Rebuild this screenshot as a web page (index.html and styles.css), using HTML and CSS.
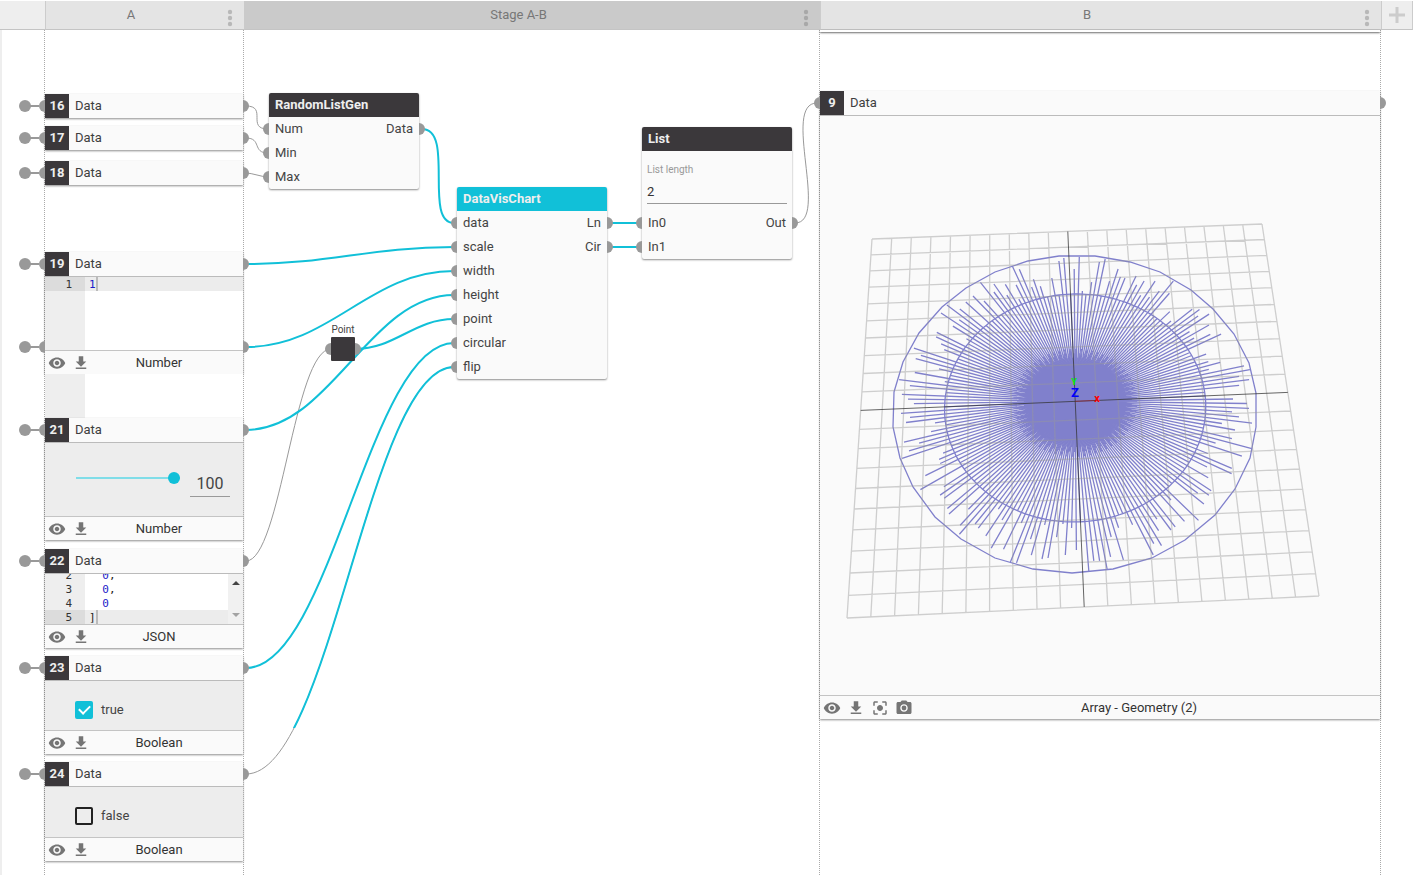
FILE: index.html
```html
<!DOCTYPE html>
<html lang="en">
<head>
<meta charset="utf-8">
<title>Stage A-B</title>
<link rel="stylesheet" href="styles.css">
</head>
<body>
<svg class="symbols" aria-hidden="true">
  <symbol id="eye" viewBox="0 0 24 24"><path d="M12 4.5C7 4.500 2.730 7.610 1 12c1.730 4.390 6 7.500 11 7.500s9.270-3.110 11-7.500c-1.730-4.390-6-7.500-11-7.500zM12 17c-2.760 0-5-2.240-5-5s2.240-5 5-5 5 2.240 5 5-2.240 5-5 5zm0-8c-1.660 0-3 1.340-3 3s1.340 3 3 3 3-1.340 3-3-1.340-3-3-3z"/></symbol>
  <symbol id="download" viewBox="0 0 24 24"><path d="M19 10h-4V3H9v7H5l7 7zM5 18v2h14v-2z"/></symbol>
  <symbol id="focus" viewBox="0 0 24 24"><path d="M12 8c-2.210 0-4 1.790-4 4s1.790 4 4 4 4-1.790 4-4-1.790-4-4-4zm-7 7H3v4c0 1.100.9 2 2 2h4v-2H5v-4zM5 5h4V3H5c-1.100 0-2 .9-2 2v4h2V5zm14-2h-4v2h4v4h2V5c0-1.100-.9-2-2-2zm0 16h-4v2h4c1.100 0 2-.9 2-2v-4h-2v4z"/></symbol>
  <symbol id="camera" viewBox="0 0 24 24"><circle cx="12" cy="12" r="3.200"/><path d="M9 2L7.170 4H4c-1.100 0-2 .9-2 2v12c0 1.100.9 2 2 2h16c1.100 0 2-.9 2-2V6c0-1.100-.9-2-2-2h-3.170L15 2H9zm3 15c-2.760 0-5-2.240-5-5s2.240-5 5-5 5 2.240 5 5-2.240 5-5 5z"/></symbol>
  <symbol id="dots" viewBox="0 0 6 18"><circle cx="3" cy="3" r="2.200"/><circle cx="3" cy="9" r="2.200"/><circle cx="3" cy="15" r="2.200"/></symbol>
</svg>

<header class="tabs">
  <div class="tab corner"></div>
  <div class="tab"><span class="tab-name">A</span><button class="menu" aria-label="Column A menu"><svg><use href="#dots"/></svg></button></div>
  <div class="tab active"><span class="tab-name">Stage A-B</span><button class="menu" aria-label="Stage menu"><svg><use href="#dots"/></svg></button></div>
  <div class="tab"><span class="tab-name">B</span><button class="menu" aria-label="Column B menu"><svg><use href="#dots"/></svg></button></div>
  <button class="tab add" aria-label="Add column"><svg viewBox="0 0 16 16"><path d="M8 0v16M0 8h16"/></svg></button>
</header>

<main class="board">
  <div class="rail"></div>

  <section class="column column-a">
    <article class="cell c16">
      <div class="title"><i class="port in source"></i><span class="num">16</span><span>Data</span><i class="port out"></i></div>
    </article>
    <article class="cell c17">
      <div class="title"><i class="port in source"></i><span class="num">17</span><span>Data</span><i class="port out"></i></div>
    </article>
    <article class="cell c18">
      <div class="title"><i class="port in source"></i><span class="num">18</span><span>Data</span><i class="port out"></i></div>
    </article>
    <article class="cell c19 open">
      <div class="title"><i class="port in source"></i><span class="num">19</span><span>Data</span><i class="port out"></i></div>
      <div class="editor editor-single">
        <div class="line current"><span class="ln">1</span><code><b>1</b><i class="caret"></i></code></div>
        <i class="port in source low"></i><i class="port out low"></i>
      </div>
      <div class="status">
        <button aria-label="Preview"><svg><use href="#eye"/></svg></button>
        <button aria-label="Download"><svg><use href="#download"/></svg></button>
        <span>Number</span>
      </div>
    </article>
    <div class="editor editor-rest"></div>
    <article class="cell open">
      <div class="title"><i class="port in source"></i><span class="num">21</span><span>Data</span><i class="port out"></i></div>
      <div class="panel slider-panel">
        <input class="slider" type="range" min="0" max="100" value="100" aria-label="Value slider">
        <input class="amount" type="text" value="100" aria-label="Value">
      </div>
      <div class="status">
        <button aria-label="Preview"><svg><use href="#eye"/></svg></button>
        <button aria-label="Download"><svg><use href="#download"/></svg></button>
        <span>Number</span>
      </div>
    </article>
    <article class="cell c22 open">
      <div class="title"><i class="port in source"></i><span class="num">22</span><span>Data</span><i class="port out"></i></div>
      <div class="editor editor-json">
        <div class="lines">
          <div class="line"><span class="ln">2</span><code>  <b>0</b>,</code></div>
          <div class="line"><span class="ln">3</span><code>  <b>0</b>,</code></div>
          <div class="line"><span class="ln">4</span><code>  <b>0</b></code></div>
          <div class="line current"><span class="ln">5</span><code>]<i class="caret"></i></code></div>
        </div>
        <div class="scroll">
          <svg viewBox="0 0 8 4"><path d="M0 4l4-4 4 4z"/></svg>
          <svg class="off" viewBox="0 0 8 4"><path d="M0 0l4 4 4-4z"/></svg>
        </div>
      </div>
      <div class="status">
        <button aria-label="Preview"><svg><use href="#eye"/></svg></button>
        <button aria-label="Download"><svg><use href="#download"/></svg></button>
        <span>JSON</span>
      </div>
    </article>
    <article class="cell c23 open">
      <div class="title"><i class="port in source"></i><span class="num">23</span><span>Data</span><i class="port out"></i></div>
      <div class="panel bool-panel"><label><input type="checkbox" checked>true</label></div>
      <div class="status">
        <button aria-label="Preview"><svg><use href="#eye"/></svg></button>
        <button aria-label="Download"><svg><use href="#download"/></svg></button>
        <span>Boolean</span>
      </div>
    </article>
    <article class="cell c24 open">
      <div class="title"><i class="port in source"></i><span class="num">24</span><span>Data</span><i class="port out"></i></div>
      <div class="panel bool-panel"><label><input type="checkbox">false</label></div>
      <div class="status">
        <button aria-label="Preview"><svg><use href="#eye"/></svg></button>
        <button aria-label="Download"><svg><use href="#download"/></svg></button>
        <span>Boolean</span>
      </div>
    </article>
  </section>

  <section class="stage">
    <svg class="wires" aria-hidden="true">
      <defs><clipPath id="live"><rect x="240" y="300" width="300" height="428"/></clipPath></defs>
      <g transform="translate(-244 -30)">
        <g class="idle">
          <path d="M246 106C268 106 246 129 268 129"/>
          <path d="M246 138C262 138 252 153 268 153"/>
          <path d="M246 173C252 173 262 177 268 177"/>
          <path d="M246 561C281 561 294 349 331 349"/>
          <path d="M246 774C331 774 369 367 454 367"/>
          <path d="M795 223C830 223 781 103 817 103"/>
        </g>
        <g class="flow">
          <path d="M422 129C455 129 423 223 454 223"/>
          <path d="M246 264C331 264 369 247 454 247"/>
          <path d="M246 347C331 347 369 271 454 271"/>
          <path d="M246 430C331 430 369 295 454 295"/>
          <path d="M355 349C395 349 414 319 454 319"/>
          <path d="M246 668C331 668 369 343 454 343"/>
          <path clip-path="url(#live)" d="M246 774C331 774 369 367 454 367"/>
          <path d="M610 223H640M610 247H640"/>
        </g>
      </g>
    </svg>

    <article class="node node-random">
      <h2>RandomListGen</h2>
      <div class="row"><i class="port in"></i><span>Num</span><span>Data</span><i class="port out"></i></div>
      <div class="row"><i class="port in"></i><span>Min</span></div>
      <div class="row"><i class="port in"></i><span>Max</span></div>
    </article>
    <article class="node node-chart">
      <h2>DataVisChart</h2>
      <div class="row"><i class="port in"></i><span>data</span><span>Ln</span><i class="port out"></i></div>
      <div class="row"><i class="port in"></i><span>scale</span><span>Cir</span><i class="port out"></i></div>
      <div class="row"><i class="port in"></i><span>width</span></div>
      <div class="row"><i class="port in"></i><span>height</span></div>
      <div class="row"><i class="port in"></i><span>point</span></div>
      <div class="row"><i class="port in"></i><span>circular</span></div>
      <div class="row"><i class="port in"></i><span>flip</span></div>
    </article>
    <article class="node node-list">
      <h2>List</h2>
      <div class="field"><label for="len">List length</label><input id="len" type="text" value="2"></div>
      <div class="row"><i class="port in"></i><span>In0</span><span>Out</span><i class="port out"></i></div>
      <div class="row"><i class="port in"></i><span>In1</span></div>
    </article>
    <div class="point"><span>Point</span><div class="point-box"><i class="port in"></i><i class="port out"></i></div></div>
  </section>

  <section class="column column-b">
    <div class="strip"></div>
    <article class="cell c9 open">
      <div class="title"><i class="port in"></i><span class="num">9</span><span>Data</span><i class="port out"></i></div>
      <svg class="view" id="view" viewBox="820 116 560 579" role="img" aria-label="Geometry preview"></svg>
      <div class="status">
        <button aria-label="Preview"><svg><use href="#eye"/></svg></button>
        <button aria-label="Download"><svg><use href="#download"/></svg></button>
        <button aria-label="Fit view"><svg><use href="#focus"/></svg></button>
        <button aria-label="Snapshot"><svg><use href="#camera"/></svg></button>
        <span>Array - Geometry (2)</span>
      </div>
    </article>
  </section>
  <div class="margin"></div>
</main>
<script src="view.js"></script>
</body>
</html>
```

FILE: styles.css
```css
* { box-sizing: border-box; }

body {
  margin: 0;
  background: #fff;
  color: #444;
  font: 13px/24px Roboto, "Liberation Sans", sans-serif;
}

button { border: 0; padding: 0; background: none; font: inherit; cursor: pointer; }
.symbols { position: absolute; width: 0; height: 0; }

/* column tabs */
.tabs {
  display: grid;
  grid-template-columns: 45px 199px 576px minmax(300px, 1fr) 32px;
  height: 30px;
  padding-top: 1px;
}
.tab {
  display: flex;
  align-items: center;
  background: #e4e4e4;
  border-left: 1px solid #ccc;
  border-bottom: 1px solid #c4c4c4;
  color: #777;
}
.tab.corner { background: #eee; border-left: 0; }
.tab.active { background: #cacaca; border-left-color: #cacaca; }
.tab-name { flex: 1; text-align: center; }
.menu { display: flex; justify-content: center; width: 28px; padding-top: 6px; }
.menu svg { width: 6px; height: 18px; fill: #b8b8b8; }
.active .menu svg { fill: #a8a8a8; }
.tab.add { justify-content: center; background: #eee; border-right: 1px solid #ccc; }
.add svg { width: 16px; height: 16px; stroke: #ccc; stroke-width: 3; fill: none; }

/* board */
.board {
  display: grid;
  grid-template-columns: 44px 199px 576px minmax(300px, 1fr) 32px;
  min-height: calc(100vh - 30px);
}
.rail { border-left: 2px solid #eee; }
.column { border-left: 1px dotted #aaa; }
.column-b { border-right: 1px dotted #aaa; }
.stage { position: relative; border-left: 1px dotted #aaa; }

/* cells */
.cell { position: relative; background: #fafafa; box-shadow: 0 1px 2px rgba(0, 0, 0, .45); }
.c16 { margin-top: 64px; }
.c17 { margin-top: 8px; }
.c18 { margin-top: 11px; }
.c19 { margin-top: 67px; }
.c22 { margin-top: 9px; }
.c23, .c24 { margin-top: 8px; }
.c9 { margin-top: 59px; }
.strip { height: 2px; box-shadow: 0 1px 2px rgba(0, 0, 0, .6); }

.title { position: relative; display: flex; gap: 6px; height: 24px; color: #3e3e3e; }
.open > .title { height: 25px; border-bottom: 1px solid #bbb; }
.num { width: 24px; height: 24px; background: #3b383b; color: #eee; font-weight: 700; text-align: center; }

.status {
  display: flex;
  align-items: center;
  height: 24px;
  border-top: 1px solid #c4c4c4;
  background: #fafafa;
  color: #333;
}
.status button { display: flex; align-items: center; justify-content: center; width: 24px; height: 23px; }
.status svg { width: 18px; height: 18px; fill: #757575; }
.status span { flex: 1; margin-left: -18px; text-align: center; }

/* ports */
.port { position: absolute; top: 6px; z-index: 2; width: 6px; height: 12px; background: #999; }
.port.in { right: 100%; border-radius: 6px 0 0 6px; }
.port.out { left: 100%; border-radius: 0 6px 6px 0; }
.port.low { top: auto; bottom: -3px; }
.source::before { content: ""; position: absolute; right: 6px; top: 5px; width: 10px; height: 2px; background: #999; }
.source::after { content: ""; position: absolute; right: 14px; top: 0; width: 12px; height: 12px; border-radius: 50%; background: #999; }

/* editors */
.editor {
  position: relative;
  background: linear-gradient(to right, #eee 40px, #fff 40px);
  font: 11px/14px "DejaVu Sans Mono", monospace;
  color: #222;
}
.editor-single { height: 73px; }
.editor-rest { height: 44px; }
.editor-json { display: flex; height: 50px; }
.lines { display: flex; flex: 1; flex-direction: column; justify-content: flex-end; overflow: hidden; }
.line { display: flex; flex: none; height: 14px; line-height: 16px; }
.line.current { background: linear-gradient(to right, #dcdcdc 40px, #ececec 40px); }
.ln { width: 40px; padding-right: 13px; text-align: right; color: #333; }
.line code { padding-left: 4px; font: inherit; white-space: pre; }
.line b { font-weight: 400; color: #1a1ac8; }
.caret { display: inline-block; width: 2px; height: 14px; background: #bbb; vertical-align: top; }
.scroll {
  display: flex;
  flex-direction: column;
  align-items: center;
  justify-content: space-between;
  width: 15px;
  padding: 7px 0 7px 1px;
  background: #f1f1f1;
}
.scroll svg { width: 8px; height: 4px; fill: #444; }
.scroll .off { fill: #a3a3a3; }

/* value panels */
.panel { background: #ededed; }
.slider-panel { display: flex; align-items: flex-start; gap: 10px; height: 73px; padding: 25px 13px 0 31px; }
.slider { flex: 1; min-width: 0; height: 20px; margin: 0; appearance: none; background: linear-gradient(#80dde8, #80dde8) center / 100% 2px no-repeat; }
.slider::-webkit-slider-thumb { appearance: none; width: 12px; height: 12px; border-radius: 50%; background: #11c0d8; }
.amount {
  width: 40px;
  height: 29px;
  padding: 2px 0 0;
  border: 0;
  border-bottom: 1px solid #999;
  background: none;
  color: #444;
  font: 16px/24px Roboto, sans-serif;
  text-align: center;
}
.bool-panel { height: 49px; padding: 17px 30px 0; }
.c24 .bool-panel { height: 50px; }
.bool-panel label { display: flex; align-items: center; gap: 8px; }
.bool-panel input {
  display: flex;
  justify-content: center;
  appearance: none;
  width: 18px;
  height: 18px;
  margin: 0;
  border: 2px solid #222;
  border-radius: 2px;
}
.bool-panel input:checked { border-color: #11c0d8; background: #11c0d8; }
.bool-panel input:checked::after {
  content: "";
  width: 5px;
  height: 9px;
  border: solid #fff;
  border-width: 0 2px 2px 0;
  transform: rotate(45deg);
}

/* stage */
.wires { position: absolute; left: 0; top: 0; width: 100%; height: 100%; overflow: visible; fill: none; }
.idle { stroke: #999; stroke-width: 1; }
.flow { stroke: #11c0d8; stroke-width: 2; }
.node {
  position: absolute;
  width: 150px;
  border-radius: 2px;
  background: #fafafa;
  box-shadow: 0 1px 2px rgba(0, 0, 0, .45);
}
.node h2 {
  margin: 0;
  padding: 0 6px;
  border-radius: 2px 2px 0 0;
  background: #3b383b;
  color: #eee;
  font-size: 13px;
  line-height: 24px;
}
.node-random { left: 25px; top: 63px; }
.node-chart { left: 213px; top: 157px; }
.node-list { left: 398px; top: 97px; }
.node-chart h2 { background: #11c0d8; }
.row { position: relative; display: flex; justify-content: space-between; height: 24px; padding: 0 6px; }
.field { display: flex; flex-direction: column; height: 60px; padding: 10px 5px 7px; }
.field label { color: #999; font-size: 10px; line-height: 18px; }
.field input {
  width: 100%;
  height: 25px;
  padding: 0;
  border: 0;
  border-bottom: 1px solid #999;
  background: none;
  color: #333;
  font: 13px/24px Roboto, sans-serif;
}
.point {
  position: absolute;
  left: 84px;
  top: 291px;
  display: flex;
  flex-direction: column;
  align-items: center;
  width: 30px;
  font-size: 10px;
  line-height: 16px;
}
.point span { height: 16px; line-height: 18px; }
.point-box { position: relative; width: 24px; height: 24px; background: #3b383b; border-radius: 1px; }

/* geometry preview */
.view { display: block; width: 100%; height: 579px; background: #fafafa; fill: none; }
.grid { stroke: #999; stroke-opacity: .45; stroke-width: 1.3; }
.axis { stroke: #333; stroke-opacity: .75; }
.geometry { stroke: #8080cc; stroke-width: 1.3; }
.axis-x { stroke: #c00; stroke-opacity: .4; }
.tag { font: 700 12px Roboto, sans-serif; text-anchor: middle; }
.tag.x { fill: #f00; font-size: 11px; }
.tag.y { fill: #0e0; font-size: 9px; }
.tag.z { fill: #00f; font-size: 13px; }
```

FILE: view.js
```js
// Ground-plane preview: a 20 x 20 grid with a radial chart, seen in perspective.
const corners = [[872, 239], [1262, 224], [1319, 596], [847, 618]];
const RAYS = 200;
const BASE = 6.1;
const CORE = 2.9;

const tips = [
  [1059,261],[1064,258],[1074,269],[1052,278],[1041,286],[1034,279],[1032,287],[1020,269],[1013,266],[1016,285],
  [1019,299],[1006,284],[1007,295],[994,284],[994,292],[981,282],[984,301],[973,296],[966,302],[960,309],
  [959,320],[947,305],[941,313],[953,326],[967,338],[937,332],[936,337],[941,344],[944,350],[914,348],
  [921,355],[916,358],[939,369],[915,372],[945,381],[899,380],[910,385],[902,394],[908,399],[914,403],
  [901,413],[910,417],[906,422],[935,423],[931,431],[904,442],[919,443],[909,451],[902,458],[943,453],
  [939,459],[940,463],[925,475],[920,489],[944,487],[940,495],[944,498],[947,508],[949,514],[968,509],
  [960,525],[959,534],[975,524],[978,528],[986,536],[991,548],[1003,549],[1002,520],[998,509],[1010,562],
  [1017,563],[1021,523],[1030,539],[1031,555],[1042,559],[1048,558],[1045,525],[1056,537],[1065,555],[1063,524],
  [1071,528],[1076,550],[1079,257],[1082,291],[1091,282],[1099,262],[1105,259],[1109,281],[1118,269],[1121,277],
  [1125,278],[1136,276],[1137,285],[1144,281],[1140,295],[1149,297],[1155,281],[1159,291],[1173,281],[1169,293],
  [1169,311],[1171,321],[1192,309],[1199,309],[1198,316],[1209,314],[1189,331],[1193,333],[1209,325],[1194,338],
  [1210,334],[1221,334],[1198,345],[1206,354],[1208,361],[1209,370],[1220,362],[1244,366],[1250,370],[1239,376],
  [1249,379],[1239,385],[1233,399],[1247,403],[1249,408],[1232,412],[1239,417],[1252,423],[1222,423],[1235,430],
  [1232,438],[1252,448],[1216,442],[1242,456],[1208,453],[1232,468],[1232,473],[1210,461],[1207,467],[1208,478],
  [1211,491],[1209,495],[1204,504],[1198,493],[1199,520],[1185,521],[1171,500],[1175,527],[1171,530],[1158,531],
  [1161,546],[1153,544],[1153,555],[1157,519],[1132,525],[1123,560],[1118,528],[1110,557],[1111,537],[1107,569],
  [1099,561],[1093,561],[1089,572]
];

const rim = [
  [894,392],[903,362],[919,333],[942,307],[966,288],[995,272],[1028,261],[1059,256],[1095,256],[1130,262],
  [1160,272],[1191,290],[1213,309],[1234,334],[1249,363],[1256,393],[1256,427],[1250,458],[1235,489],[1215,515],
  [1185,540],[1152,558],[1113,569],[1072,573],[1033,569],[995,558],[961,539],[935,517],[913,487],[900,458],[893,427]
];

const [[x0, y0], [x1, y1], [x2, y2], [x3, y3]] = corners;
const sx = x0 - x1 + x2 - x3, sy = y0 - y1 + y2 - y3;
const ax = x1 - x2, ay = y1 - y2, bx = x3 - x2, by = y3 - y2;
const det = ax * by - bx * ay;
const g = (sx * by - bx * sy) / det;
const h = (ax * sy - sx * ay) / det;
const a = x1 - x0 + g * x1, b = x3 - x0 + h * x3;
const d = y1 - y0 + g * y1, e = y3 - y0 + h * y3;

function project(x, y) {
  const u = (x + 10) / 20, v = (10 - y) / 20, w = g * u + h * v + 1;
  return [(a * u + b * v + x0) / w, (d * u + e * v + y0) / w];
}

function unproject(px, py) {
  const m = a - g * px, n = b - h * px, o = d - g * py, p = e - h * py;
  const k = m * p - n * o;
  const u = ((px - x0) * p - n * (py - y0)) / k;
  const v = (m * (py - y0) - o * (px - x0)) / k;
  return [u * 20 - 10, 10 - v * 20];
}

const view = document.getElementById("view");
const fmt = p => p[0].toFixed(1) + " " + p[1].toFixed(1);

function add(tag, attrs, text) {
  const el = document.createElementNS("http://www.w3.org/2000/svg", tag);
  for (const key in attrs) el.setAttribute(key, attrs[key]);
  if (text) el.textContent = text;
  view.appendChild(el);
}

const radii = new Array(RAYS).fill(BASE);
for (const [px, py] of tips) {
  const [x, y] = unproject(px, py);
  const i = (Math.round(Math.atan2(y, x) / (2 * Math.PI) * RAYS) + RAYS) % RAYS;
  radii[i] = Math.max(radii[i], Math.hypot(x, y));
}

const polar = (r, i) => project(r * Math.cos(i * 2 * Math.PI / RAYS), r * Math.sin(i * 2 * Math.PI / RAYS));
const origin = fmt(project(0, 0));
add("path", { class: "geometry", d: radii.map((r, i) => "M" + origin + "L" + fmt(polar(r, i))).join("") });
// The core fills up where neighbouring rays merge; its edge is ragged.
add("path", { class: "geometry", d: radii.map((r, i) => "M" + origin + "L" + fmt(polar(CORE - (i % 3) * 0.25, i + 0.5))).join("") });
add("path", { class: "geometry", d: "M" + radii.map((r, i) => fmt(polar(BASE, i))).join("L") + "Z" });
add("path", { class: "geometry", d: "M" + rim.map(fmt).join("L") + "Z" });

let lines = "";
for (let i = -10; i <= 10; i++) {
  if (i === 0) continue;
  lines += "M" + fmt(project(i, -10)) + "L" + fmt(project(i, 10));
  lines += "M" + fmt(project(-10, i)) + "L" + fmt(project(10, i));
}
add("path", { class: "grid", d: lines });
add("path", { class: "axis", d: "M" + fmt(project(0, -10)) + "L" + fmt(project(0, 10)) + "M" + fmt(project(-10, 0)) + "L" + fmt(project(10, 0)) });
add("path", { class: "axis-x", d: "M" + origin + "L" + fmt(project(1, 0)) });
add("text", { class: "tag y", x: 1074, y: 385 }, "Y");
add("text", { class: "tag z", x: 1075, y: 397 }, "Z");
add("text", { class: "tag x", x: 1097, y: 402 }, "x");
```
